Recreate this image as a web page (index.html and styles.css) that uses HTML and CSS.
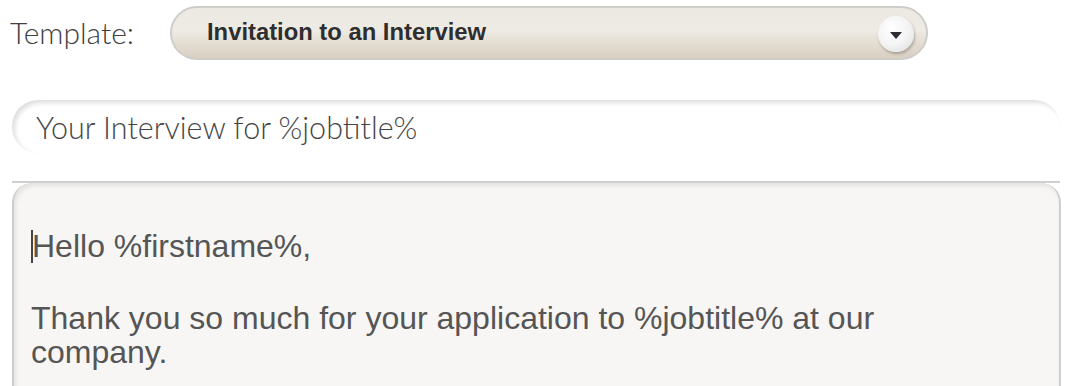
FILE: index.html
```html
<!DOCTYPE html>
<html lang="en">
<head>
  <meta charset="UTF-8" />
  <title>Message Template</title>
  <link rel="stylesheet" href="styles.css">
</head>
<body>
  <div class="template-row">
    <label class="template-label">Template:</label>
    <div class="template-select">
      <span class="template-name">Invitation to an Interview</span>
      <span class="select-button">
        <svg width="12" height="8" viewBox="0 0 12 8"><path d="M0 0 L12 0 L6 7 Z" fill="#2a2d33"/></svg>
      </span>
    </div>
  </div>

  <div class="subject">Your Interview for %jobtitle%</div>

  <div class="divider"></div>

  <div class="message">
    <p class="first"><span class="caret"></span>Hello %firstname%,</p>
    <p>Thank you so much for your application to %jobtitle% at our<br>company.</p>
  </div>
</body>
</html>
```

FILE: styles.css
```css
* {
  margin: 0;
  padding: 0;
  box-sizing: border-box;
}

body {
  background: #fff;
  width: 1092px;
  height: 386px;
  overflow: hidden;
  font-family: Lato, "Liberation Sans", sans-serif;
  color: #555;
}

.template-row {
  display: flex;
  align-items: center;
  padding: 6px 0 0 10px;
}

.template-label {
  width: 160px;
  margin-top: -3px;
  font-family: Lato, sans-serif;
  font-weight: 300;
  font-size: 30px;
  color: #404040;
}

.template-select {
  width: 758px;
  height: 54px;
  border: 2px solid #cfcdc9;
  border-radius: 27px;
  background: linear-gradient(#ece9e2 0%, #eeebe5 45%, #e4ddd2 70%, #d9d0c2 100%);
  display: flex;
  align-items: center;
  justify-content: space-between;
  padding: 0 12px 0 35px;
}

.template-name {
  font-family: "Liberation Sans", Arial, sans-serif;
  font-weight: bold;
  font-size: 23.8px;
  color: #2e2e2e;
  margin-top: -2px;
}

.select-button {
  width: 36px;
  height: 36px;
  border-radius: 50%;
  background: radial-gradient(circle at 40% 35%, #ffffff 0%, #f4f4f4 50%, #dcdcdc 100%);
  box-shadow: 1px 2px 3px rgba(0, 0, 0, 0.25);
  display: flex;
  align-items: center;
  justify-content: center;
  padding-top: 3px;
  margin-top: 2px;
}

.subject {
  margin: 40px 32px 0 12px;
  height: 53px;
  border-radius: 26px 26px 0 26px;
  box-shadow: inset 3px 3px 4px rgba(0, 0, 0, 0.13);
  padding: 9px 0 0 24px;
  font-family: Lato, sans-serif;
  font-weight: 300;
  font-size: 30.5px;
  color: #454545;
}

.divider {
  margin: 28px 32px 0 12px;
  height: 2px;
  background: #cfcfcf;
}

.message {
  margin: 0 31px 0 12px;
  height: 220px;
  background: #f7f6f4;
  border-left: 2px solid #cdcdcd;
  border-right: 2px solid #cdcdcd;
  border-radius: 20px 20px 0 0;
  box-shadow: inset 2px 3px 4px rgba(0, 0, 0, 0.08);
  padding: 46px 0 0 17px;
  font-family: "Liberation Sans", Arial, sans-serif;
  font-size: 32px;
  line-height: 34px;
  color: #555;
}

.message p {
  margin-bottom: 38px;
}

.caret {
  display: inline-block;
  width: 2px;
  height: 33px;
  background: #444;
  vertical-align: -6px;
  margin-right: -1px;
}
```
